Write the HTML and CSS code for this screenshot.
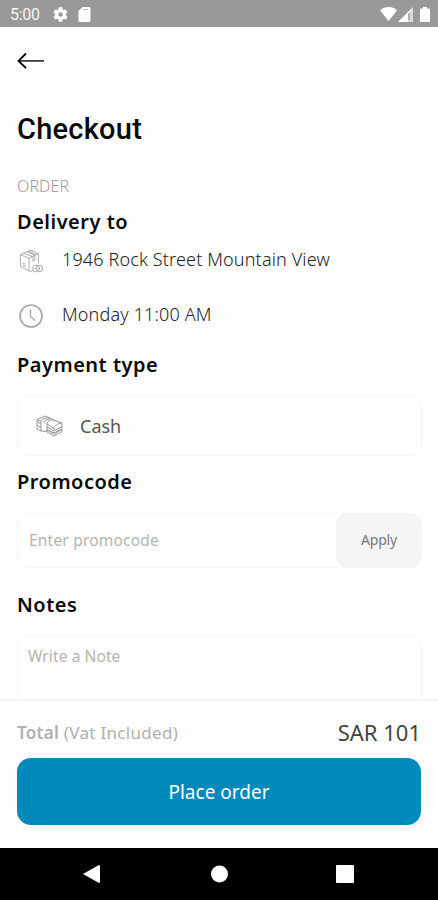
FILE: index.html
```html
<!DOCTYPE html>
<html lang="en">
<head>
<meta charset="utf-8">
<title>Checkout</title>
<link rel="stylesheet" href="styles.css">
</head>
<body>
<div class="phone">
  <header class="status">
    <span class="clock">5:00</span>
    <svg class="gear" width="15" height="15" viewBox="2 2 20 20"><path fill="#fff" d="M19.14 12.94c.04-.3.06-.61.06-.94 0-.32-.02-.64-.07-.94l2.03-1.58c.18-.14.23-.41.12-.61l-1.92-3.32c-.12-.22-.37-.29-.59-.22l-2.39.96c-.5-.38-1.03-.7-1.62-.94l-.36-2.54c-.04-.24-.24-.41-.48-.41h-3.84c-.24 0-.43.17-.47.41l-.36 2.54c-.59.24-1.13.57-1.62.94l-2.39-.96c-.22-.08-.47 0-.59.22L2.74 8.87c-.12.21-.08.47.12.61l2.03 1.58c-.05.3-.09.63-.09.94s.02.64.07.94l-2.03 1.58c-.18.14-.23.41-.12.61l1.92 3.32c.12.22.37.29.59.22l2.39-.96c.5.38 1.03.7 1.62.94l.36 2.54c.05.24.24.41.48.41h3.84c.24 0 .44-.17.47-.41l.36-2.54c.59-.24 1.13-.56 1.62-.94l2.39.96c.22.08.47 0 .59-.22l1.92-3.32c.12-.22.07-.47-.12-.61l-2.01-1.58zM12 15a3 3 0 1 1 0-6 3 3 0 0 1 0 6z"/></svg>
    <svg class="card-icon" width="13" height="15" viewBox="0 0 13 15"><path fill="#fff" d="M4.500 0H11a1.500 1.500 0 0 1 1.500 1.500v12a1.500 1.500 0 0 1-1.500 1.500H2A1.500 1.500 0 0 1 .5 13.500V4z"/><path stroke="#bbb" d="M5 2.500h5.500"/></svg>
    <svg class="wifi" width="17" height="14" viewBox="0 0 17 14"><path fill="#fff" d="M0 3.300C5-1 12-1 17 3.300L8.500 14z"/></svg>
    <svg class="signal" width="15" height="15" viewBox="0 0 15 15"><path fill="#fff" fill-opacity=".65" d="M15 0v15H0z"/><path fill="#fff" d="M15 0L0 15h10V7z"/><path stroke="#999" stroke-width="1.400" d="M11 6.500v6.500"/></svg>
    <svg class="battery" width="10" height="15" viewBox="0 0 10 15"><path fill="#fff" d="M3 0h4v1.500h2a1 1 0 0 1 1 1V14a1 1 0 0 1-1 1H1a1 1 0 0 1-1-1V2.500a1 1 0 0 1 1-1h2z"/></svg>
  </header>

  <main class="content">
    <svg class="back" width="28" height="18" viewBox="0 0 28 18" fill="none" stroke="#000"><path stroke-width="1.700" stroke="#333" d="M1 8.900h26"/><path stroke-width="1.800" d="M9 1.500L1.500 8.900l7.500 7.300"/></svg>
    <h1 class="title">Checkout</h1>
    <p class="label">ORDER</p>
    <h2 class="heading">Delivery to</h2>
    <div class="row address">
      <svg class="row-icon" width="26" height="28" viewBox="0 0 26 28" fill="none" stroke="#b4b4b4" stroke-width="1.100"><path d="M3.500 9.500L13 5l8.500 3.500v10M3.500 9.500l8.500 4 9.500-5M3.500 9.500v12L13 26.500l4-1.500M12 13.500v12.500M6.500 8l9.500 4v4l2-1v-4.500L9.500 6.500M11.500 6l8 4M5.500 20l3 1.500M5.500 18l3 1.500"/><circle cx="19" cy="23.500" r="3.200"/><circle cx="22.300" cy="23.500" r="3.200"/><path d="M17.500 23.500h3M22.500 22v3"/></svg>
      <span>1946 Rock Street Mountain View</span>
    </div>
    <div class="row time">
      <svg class="row-icon" width="26" height="28" viewBox="0 0 26 28" fill="none" stroke="#aaa"><circle cx="14" cy="16" r="11" stroke-width="1.700"/><path stroke-width="1.300" d="M13.500 9.500v7l4.500 4"/></svg>
      <span>Monday 11:00 AM</span>
    </div>
    <h2 class="heading payment">Payment type</h2>
    <div class="cash">
      <svg width="28" height="22" viewBox="0 0 28 22" fill="none" stroke="#999" stroke-width="1"><path d="M1 4.500L9 1l5 2M1 4.500l4 2M1 4.500V7l4 2M1 8v2.500l4 2M1 11.500V14l4 2 6 .5M5 6.500v9.500M5 6.500c0-2.500 5-4 9-3.500l4 2M8 8.500c0-2.500 3-4.500 6-4.500M11 9l7 4.500M11 9c0-2.500 3-4.500 6-4l9 3M18 13.500c0-3 4-5.500 8-5M11 9v8l7 4 8-4.500v-2L18 19l-7-4M11 12l7 4 8-4.500v-3M18 13.500V16M26 11.500v2L18 18l-7-3.500"/></svg>
      <span>Cash</span>
    </div>
    <h2 class="heading promo-heading">Promocode</h2>
    <div class="promo">
      <span class="placeholder">Enter promocode</span>
      <button class="apply">Apply</button>
    </div>
    <h2 class="heading notes-heading">Notes</h2>
    <div class="note">Write a Note</div>
  </main>

  <footer class="summary">
    <div class="total">
      <span class="total-label"><b>Total</b> (Vat Included)</span>
      <span class="amount">SAR 101</span>
    </div>
    <button class="place">Place order</button>
  </footer>

  <nav class="nav">
    <svg width="17" height="18" viewBox="0 0 17 18"><path fill="#fff" d="M0 9L15.500 .3Q17 0 17 1v16q0 1-1.500.7z"/></svg>
    <svg class="home" width="17" height="18" viewBox="0 0 17 18"><circle cx="8.500" cy="9" r="8.500" fill="#fff"/></svg>
    <svg class="recent" width="18" height="18" viewBox="0 0 18 18"><rect width="18" height="18" rx="1" fill="#fff"/></svg>
  </nav>
</div>
</body>
</html>
```
FILE: styles.css
```css
* { box-sizing: border-box; margin: 0; padding: 0; }
body { background: #fff; font-family: "Noto Sans", "Open Sans", sans-serif; color: #0a0a0a; }
button { border: 0; font: inherit; }
svg { display: block; flex: none; }
.phone { width: 438px; height: 900px; display: flex; flex-direction: column; overflow: hidden; background: #fefefe; }

.status { height: 27px; flex: none; display: flex; align-items: center; background: #999; padding: 1px 8px 0 10px; }
.clock { width: 43px; padding-top: 1px; font: 400 16px/26px Roboto, sans-serif; color: #f4f4f4; letter-spacing: -0.3px; }
.gear { margin-right: 10px; }
.wifi { margin-left: auto; margin-right: 1px; }
.signal { margin-right: 7px; }

.content { flex: 1; min-height: 0; overflow: hidden; padding: 25px 16px 0 17px; display: flex; flex-direction: column; }
.back { flex: none; }
.title { margin-top: 42px; height: 34px; font: 500 29px/34px Roboto, sans-serif; letter-spacing: 0.25px; flex: none; }
.label { margin-top: 28px; height: 24px; font-size: 16px; line-height: 24px; font-weight: 300; letter-spacing: 0.1px; color: #999; flex: none; }
.heading { margin-top: 10px; height: 28px; font-size: 20px; line-height: 28px; font-weight: 600; letter-spacing: 0.5px; flex: none; }
.row { display: flex; align-items: center; height: 28px; font-size: 18px; line-height: 28px; font-weight: 300; letter-spacing: 0.15px; color: #222; flex: none; }
.row-icon { margin-right: 19px; }
.address { margin-top: 9px; }
.time { margin-top: 27px; }
.payment { margin-top: 23px; }
.cash { margin-top: 16px; height: 61px; flex: none; display: flex; align-items: center; gap: 16px; padding-left: 18px; border: 1.5px solid #f6f6f6; border-radius: 12px; font-size: 18px; color: #555; }
.promo-heading { margin-top: 12px; }
.promo { margin-top: 17px; height: 55px; flex: none; display: flex; align-items: center; justify-content: space-between; border: 1.5px solid #f6f6f6; border-radius: 12px; padding-left: 11px; font-size: 15.500px; letter-spacing: 0.2px; color: #b4b4b4; }
.placeholder { margin-top: -2px; }
.apply { width: 86px; height: 55px; margin: -1px; padding-bottom: 2px; background: #f5f5f5; border-radius: 12px; font-size: 14px; letter-spacing: -0.2px; color: #777; }
.notes-heading { margin-top: 23px; }
.note { margin-top: 16px; height: 120px; flex: none; border: 1.5px solid #f6f6f6; border-radius: 12px; padding: 9px 10px; font-size: 15.500px; line-height: 22px; letter-spacing: 0.1px; color: #b4b4b4; }

.summary { height: 149px; flex: none; border-top: 2px solid #f6f6f6; background: #fefefe; padding: 15px 17px 0; }
.total { display: flex; justify-content: space-between; align-items: center; height: 32px; color: #b0b0b0; font-size: 17px; }
.total-label { letter-spacing: 0.3px; }
.total b { font-weight: 600; }
.amount { font-size: 22px; color: #444; }
.place { display: block; margin-top: 10px; width: 404px; height: 67px; border-radius: 14px; background: #008abb; color: #fff; font-size: 19px; }

.nav { height: 52px; flex: none; display: flex; align-items: center; background: #000; padding-left: 83px; }
.home { margin-left: 111px; }
.recent { margin-left: 108px; }
```
